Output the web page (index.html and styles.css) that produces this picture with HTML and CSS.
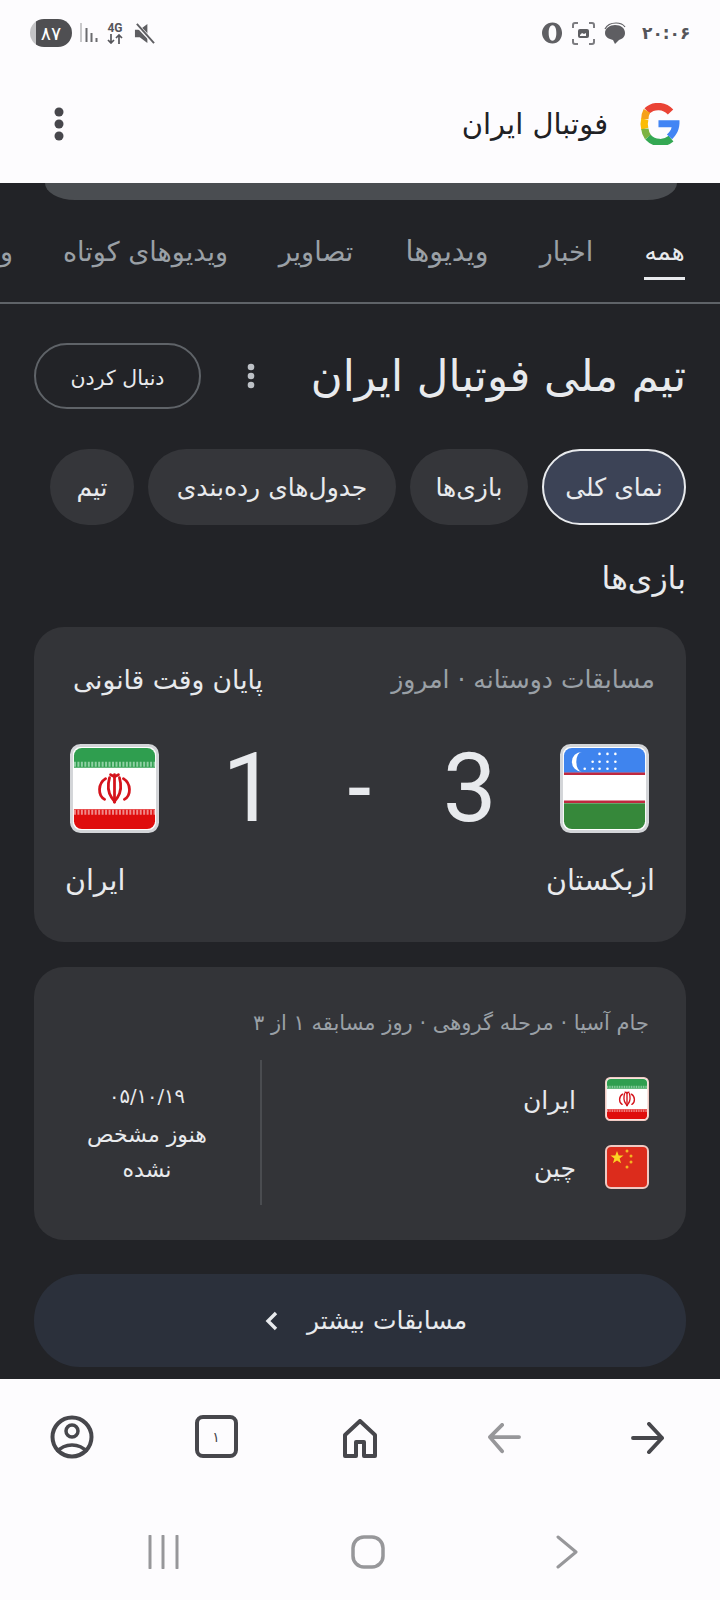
FILE: index.html
```html
<!DOCTYPE html>
<html lang="fa" dir="rtl">
<head>
<meta charset="utf-8">
<title>فوتبال ایران</title>
<link rel="stylesheet" href="styles.css">
</head>
<body>
<svg class="defs" width="0" height="0" aria-hidden="true">
  <symbol id="flag-iran" viewBox="0 0 90 90">
    <rect x="1.5" y="1.5" width="87" height="87" rx="9" fill="#fff" stroke="currentColor" stroke-width="3"/>
    <path d="M4 24V12a8 8 0 0 1 8-8h66a8 8 0 0 1 8 8v12z" fill="#2f9e4f"/>
    <path d="M4 66h82v12a8 8 0 0 1-8 8H12a8 8 0 0 1-8-8z" fill="#df0d0d"/>
    <path d="M4 20.500h82" stroke="#8fd0a3" stroke-width="5" stroke-dasharray="2 1.5"/>
    <path d="M4 69h82" stroke="#f08a8a" stroke-width="5" stroke-dasharray="2 1.500"/>
    <g fill="none" stroke="#d5141c" stroke-width="2.800" stroke-linecap="round">
      <path d="M45 31v28"/>
      <path d="M40 34c-2 7-2 14 2 20l3 4"/>
      <path d="M50 34c2 7 2 14-2 20l-3 4"/>
      <path d="M36 35c-8 5-8 17-1 21"/>
      <path d="M54 35c8 5 8 17 1 21"/>
      <path d="M41 31l4 2 4-2"/>
    </g>
  </symbol>
</svg>

<header class="top">
  <div class="status">
    <div class="status-left">
      <span class="battery"><span class="battery-num">۸۷</span></span>
      <svg class="i-signal" viewBox="0 0 18 20"><path d="M1 0v19" stroke="#c9c9cb" stroke-width="2"/><path d="M6.500 5v14M11.500 10v9M16.500 15v4" stroke="#6b6b6e" stroke-width="2"/></svg>
      <span class="net"><span class="net-g">4G</span><svg class="i-updown" viewBox="0 0 16 10"><path d="M4 0v9M1 6l3 3 3-3M12 10V1M9 4l3-3 3 3" fill="none" stroke="#55555a" stroke-width="1.700"/></svg></span>
      <svg class="i-mute" viewBox="0 0 22 22"><path d="M1 7h5l8-6v20l-8-6H1z" fill="#5e5e62"/><path d="M2 1l19 20" stroke="#fdfcfe" stroke-width="4"/><path d="M3 1l18 20" stroke="#5e5e62" stroke-width="2"/></svg>
    </div>
    <div class="status-right">
      <span class="time">۲۰:۰۶</span>
      <svg class="i-bubble" viewBox="0 0 22 22"><path d="M11 3c6 0 10 3 10 8 0 4-3 6-6 7l-4 4-2-4c-4-1-8-3-8-7 0-5 5-8 10-8z" fill="#5e5e62"/><path d="M1 7c2-4 6-6 11-6 4 0 7 1 9 4" fill="none" stroke="#5e5e62" stroke-width="1.200"/></svg>
      <svg class="i-shot" viewBox="0 0 25 25"><path d="M2 7V4a2 2 0 0 1 2-2h3M18 2h3a2 2 0 0 1 2 2v3M23 18v3a2 2 0 0 1-2 2h-3M7 23H4a2 2 0 0 1-2-2v-3" fill="none" stroke="#7c7c80" stroke-width="2"/><rect x="7" y="8" width="11" height="9" rx="2" fill="#5e5e62"/><path d="M9 14l2-2 2 1 2-1v3H9z" fill="#fdfcfe"/></svg>
      <svg class="i-opera" viewBox="0 0 22 22"><path fill-rule="evenodd" d="M11 0c6 0 10 5 10 11s-4 11-10 11S0 17 0 11 5 0 11 0zm0 3c-3 0-4 4-4 8s1 8 4 8 4-4 4-8-1-8-4-8z" fill="#606064"/></svg>
    </div>
  </div>
  <div class="searchbar">
    <svg class="g-logo" viewBox="1.500 1 40 40">
      <path d="M32.500 9.500A16 16 0 0 0 10 8.500" fill="none" stroke="#ea4335" stroke-width="7"/>
      <path d="M10 8.500a16 16 0 0 0-2 8" fill="none" stroke="#f6a11b" stroke-width="7"/>
      <path d="M8 16.500a16 16 0 0 0 0 9" fill="none" stroke="#fbbc05" stroke-width="7"/>
      <path d="M8 25.500a16 16 0 0 0 3 8" fill="none" stroke="#7cb342" stroke-width="7"/>
      <path d="M11 33.500a16 16 0 0 0 22 1.500" fill="none" stroke="#34a853" stroke-width="7"/>
      <path d="M21 17.500h20c.500 9-3 14-7 18l-5-4.500c2-2 4-4 4.500-7H21z" fill="#4285f4"/>
    </svg>
    <span class="query">فوتبال ایران</span>
    <svg class="kebab-top" viewBox="0 0 10 34"><circle cx="5" cy="5" r="4.500"/><circle cx="5" cy="17" r="4.500"/><circle cx="5" cy="29" r="4.500"/></svg>
  </div>
</header>

<main class="page">
  <div class="search-stub"></div>

  <nav class="tabs">
    <span class="tab tab-active">همه</span>
    <span class="tab tab-news">اخبار</span>
    <span class="tab tab-videos">ویدیوها</span>
    <span class="tab tab-images">تصاویر</span>
    <span class="tab tab-shorts">ویدیوهای کوتاه</span>
    <span class="tab">و</span>
  </nav>

  <section class="content">
    <div class="title-row">
      <h1 class="title">تیم ملی فوتبال ایران</h1>
      <svg class="kebab-title" viewBox="0 0 8 26"><circle cx="4" cy="4" r="3.300"/><circle cx="4" cy="13" r="3.300"/><circle cx="4" cy="22" r="3.300"/></svg>
      <button class="follow">دنبال کردن</button>
    </div>

    <div class="chips">
      <span class="chip chip-on">نمای کلی</span>
      <span class="chip chip-games">بازی‌ها</span>
      <span class="chip chip-tables">جدول‌های رده‌بندی</span>
      <span class="chip chip-team">تیم</span>
    </div>

    <h2 class="heading">بازی‌ها</h2>

    <article class="card result">
      <div class="result-head">
        <span class="muted">مسابقات دوستانه · امروز</span>
        <span class="final">پایان وقت قانونی</span>
      </div>
      <div class="score-row">
        <svg class="flag-big flag-edge" viewBox="0 0 90 90">
          <rect x="1.500" y="1.500" width="87" height="87" rx="9" fill="#fff" stroke="currentColor" stroke-width="3"/>
          <path d="M4 29V12a8 8 0 0 1 8-8h66a8 8 0 0 1 8 8v17z" fill="#3f84ee"/>
          <path d="M4 30h82M4 58.500h82" stroke="#c0293f" stroke-width="2.500"/>
          <path d="M4 60h82v18a8 8 0 0 1-8 8H12a8 8 0 0 1-8-8z" fill="#36883a"/>
          <path d="M22 8a10 10 0 0 0 0 20a5.500 10 0 0 1 0-20z" fill="#fff"/>
          <g fill="#fff"><circle cx="40" cy="10" r="1.300"/><circle cx="48" cy="10" r="1.300"/><circle cx="56" cy="10" r="1.300"/><circle cx="33" cy="18" r="1.300"/><circle cx="40" cy="18" r="1.300"/><circle cx="48" cy="18" r="1.300"/><circle cx="56" cy="18" r="1.300"/><circle cx="25" cy="25" r="1.300"/><circle cx="33" cy="25" r="1.300"/><circle cx="40" cy="25" r="1.300"/><circle cx="48" cy="25" r="1.300"/><circle cx="56" cy="25" r="1.300"/></g>
        </svg>
        <span class="score">3</span>
        <span class="score-dash">-</span>
        <span class="score">1</span>
        <svg class="flag-big flag-edge"><use href="#flag-iran"/></svg>
      </div>
      <div class="result-names">
        <span>ازبکستان</span>
        <span>ایران</span>
      </div>
    </article>

    <article class="card fixture">
      <div class="muted fixture-head">جام آسیا · مرحله گروهی · روز مسابقه ۱ از ۳</div>
      <div class="fixture-body">
        <div class="teams">
          <div class="team">
            <svg class="flag-small flag-edge-pink"><use href="#flag-iran"/></svg>
            <span class="team-name">ایران</span>
          </div>
          <div class="team">
            <svg class="flag-small flag-edge-pink" viewBox="0 0 44 44">
              <rect x="1" y="1" width="42" height="42" rx="5" fill="#dc2c1c" stroke="currentColor" stroke-width="2"/>
              <path d="M12 6l1.700 4.600h4.800l-3.900 3 1.500 4.700-4.100-2.800-4.100 2.800 1.500-4.700-3.900-3h4.800z" fill="#fbd322"/>
              <g fill="#f4b320"><circle cx="22" cy="6" r="1.500"/><circle cx="26" cy="11" r="1.500"/><circle cx="26" cy="17" r="1.500"/><circle cx="22" cy="22" r="1.500"/></g>
            </svg>
            <span class="team-name">چین</span>
          </div>
        </div>
        <div class="when">
          <span class="when-date">۰۵/۱۰/۱۹</span>
          <span>هنوز مشخص</span>
          <span>نشده</span>
        </div>
      </div>
    </article>

    <a class="more">
      <span>مسابقات بیشتر</span>
      <svg class="i-chev" viewBox="0 0 14 20"><path d="M11 2L3 10l8 8" fill="none" stroke="#e8eaed" stroke-width="3.400"/></svg>
    </a>
  </section>
</main>

<footer class="bottom">
  <div class="toolbar">
    <svg class="i-forward" viewBox="0 0 36 34"><path d="M2 17h31M19 2l14 15-14 15" fill="none" stroke="#47474c" stroke-width="4" stroke-linecap="round" stroke-linejoin="round"/></svg>
    <svg class="i-back" viewBox="0 0 36 34"><path d="M34 15H3M16 2L3 15l13 15" fill="none" stroke="#97979a" stroke-width="4" stroke-linecap="round" stroke-linejoin="round"/></svg>
    <svg class="i-home" viewBox="0 0 34 40"><path d="M17 2L2 16v21h11V23h8v14h11V16z" fill="none" stroke="#47474c" stroke-width="4" stroke-linejoin="round"/></svg>
    <span class="i-tabs">۱</span>
    <svg class="i-user" viewBox="0 0 44 44"><circle cx="22" cy="22" r="19.500" fill="none" stroke="#47474c" stroke-width="4"/><circle cx="22" cy="16" r="6" fill="none" stroke="#47474c" stroke-width="3.500"/><path d="M7 37c4-5 9-7 15-7s11 2 15 7" fill="none" stroke="#47474c" stroke-width="3.500"/></svg>
  </div>
  <div class="navbar">
    <svg class="i-nav-back" viewBox="0 0 22 34"><path d="M2 2l18 15L2 32" fill="none" stroke="#97979a" stroke-width="3" stroke-linecap="round" stroke-linejoin="round"/></svg>
    <svg class="i-nav-home" viewBox="0 0 34 34"><rect x="2" y="2" width="30" height="30" rx="11" fill="none" stroke="#97979a" stroke-width="3.500"/></svg>
    <svg class="i-nav-recent" viewBox="0 0 32 34"><path d="M2 1v32M15 1v32M29 1v32" stroke="#97979a" stroke-width="3" stroke-linecap="round"/></svg>
  </div>
</footer>
</body>
</html>
```
FILE: styles.css
```css
* { box-sizing: border-box; }
html, body { margin: 0; padding: 0; }
body {
  width: 720px;
  height: 1600px;
  overflow: hidden;
  display: flex;
  flex-direction: column;
  font-family: "DejaVu Sans", "Noto Sans", sans-serif;
  background: #222327;
  color: #e8eaed;
}
.defs { position: absolute; }

/* top */
.top { height: 183px; background: #fdfcfe; color: #202124; flex: none; }
.status {
  height: 66px;
  padding: 19px 30px 0 30px;
  display: flex;
  flex-direction: row-reverse;
  justify-content: space-between;
  align-items: flex-start;
}
.status-left { display: flex; direction: ltr; align-items: center; height: 28px; }
.status-right { display: flex; direction: ltr; flex-direction: row-reverse; align-items: center; height: 28px; }
.battery {
  width: 42px; height: 28px; border-radius: 14px;
  background: linear-gradient(90deg, #c4c4c6 15%, #4f4f52 15%);
  display: flex; align-items: center; justify-content: center;
}
.battery-num { font-size: 19px; color: #fff; }
.i-signal { width: 18px; height: 20px; margin-left: 8px; }
.net { display: flex; flex-direction: column; align-items: center; width: 16px; margin-left: 9px; }
.net-g { font-size: 12px; line-height: 12px; font-family: "Roboto", sans-serif; font-weight: 700; color: #55555a; }
.i-updown { width: 16px; height: 10px; }
.i-mute { width: 21px; height: 21px; margin-left: 11px; }
.time { font-size: 17px; color: #55555a; font-weight: 700; margin-right: 0; width: 48px; direction: ltr; text-align: center; }
.i-bubble { width: 22px; height: 22px; margin-right: 16px; }
.i-shot { width: 25px; height: 25px; margin-right: 8px; }
.i-opera { width: 21px; height: 22px; margin-right: 8px; }

.searchbar { height: 117px; padding: 37px 40px 0 54px; display: flex; align-items: flex-start; }
.g-logo { width: 42px; height: 42px; flex: none; }
.query { font-size: 29px; line-height: 42px; margin-right: 30px; color: #202124; }
.kebab-top { width: 10px; height: 34px; margin-right: auto; margin-top: 4px; fill: #47474c; }

/* page */
.page { flex: 1; min-height: 0; overflow: hidden; }
.search-stub { height: 17px; margin: 0 43px 0 45px; background: #4a4d51; border-radius: 0 0 30px 30px / 0 0 17px 17px; }
.tabs {
  height: 104px;
  border-bottom: 2px solid #5f6368;
  display: flex;
  gap: 51px;
  padding: 0 35px 0 0;
  overflow: hidden;
  white-space: nowrap;
  font-size: 27px;
  color: #9aa0a6;
}
.tab { flex: none; height: 80px; padding-top: 32px; line-height: 40px; display: flex; justify-content: center; }
.tab-active { width: 41px; font-size: 24.500px; color: #e8eaed; border-bottom: 3px solid #e8eaed; }
.tab-news { width: 53px; }
.tab-videos { width: 84px; font-size: 28.500px; }
.tab-images { width: 76px; }
.tab-shorts { width: 163px; }

.content { padding: 0 34px 0 34px; }
.title-row { height: 66px; margin-top: 39px; display: flex; align-items: center; }
.title { margin: 0; font-size: 43.500px; font-weight: 400; line-height: 66px; white-space: nowrap; }
.kebab-title { width: 8px; height: 26px; margin-right: auto; fill: #bdc1c6; }
.follow {
  width: 167px; height: 66px; margin-right: 46px; border: 2px solid #5f6368; border-radius: 33px;
  background: none; color: #e8eaed; font: inherit; font-size: 20.500px; padding: 4px 0 0;
}

.chips { display: flex; gap: 14px; margin-top: 40px; }
.chip {
  height: 76px; border-radius: 38px; background: #35363a; font-size: 25px;
  display: flex; align-items: center; justify-content: center; white-space: nowrap; color: #e8eaed;
}
.chip-on { width: 144px; background: #3c4356; border: 2px solid #e8eaed; }
.chip-games { width: 118px; }
.chip-tables { width: 248px; }
.chip-team { width: 84px; }

.heading { margin: 30px 0 0; font-size: 31.500px; font-weight: 400; line-height: 46px; }

.card { background: #333438; border-radius: 30px; }
.result { height: 315px; margin-top: 26px; padding: 32px 31px 0 31px; }
.muted { color: #9aa0a6; font-size: 25px; }
.result-head { display: flex; justify-content: space-between; align-items: center; line-height: 42px; }
.final { font-size: 26.500px; color: #e8eaed; margin-left: 8px; }
.score-row { display: flex; align-items: center; height: 89px; margin: 43px 6px 0 5px; justify-content: space-between; }
.flag-big { width: 89px; height: 89px; flex: none; }
.flag-edge { color: #d3d5d8; }
.flag-edge-pink { color: #efc9c2; }
.score { font-family: "Roboto", sans-serif; font-size: 96px; font-weight: 400; line-height: 89px; width: 70px; text-align: center; }
.score-dash { font-family: "Roboto", sans-serif; font-size: 78px; font-weight: 500; line-height: 89px; width: 40px; text-align: center; }
.result-names { display: flex; justify-content: space-between; font-size: 28.500px; line-height: 46px; margin-top: 25px; }

.fixture { height: 273px; margin-top: 25px; padding: 36px 37px 0 0; }
.fixture-head { line-height: 40px; font-size: 21px; }
.fixture-body { display: flex; margin-top: 17px; height: 145px; }
.teams { width: 389px; display: flex; flex-direction: column; padding-top: 17px; gap: 24px; border-left: 2px solid #4a4c50; }
.team { display: flex; align-items: center; gap: 29px; font-size: 25px; height: 44px; }
.team-name { padding-top: 2px; }
.flag-small { width: 44px; height: 44px; flex: none; }
.when { flex: 1; display: flex; flex-direction: column; align-items: center; padding-top: 17px; font-size: 22px; line-height: 35px; }
.when-date { font-size: 19.500px; line-height: 40px; }

.more {
  height: 93px; margin-top: 34px; padding-left: 12px; background: #2b303b; border-radius: 46px;
  display: flex; align-items: center; justify-content: center; gap: 28px; font-size: 25px; color: #e8eaed;
}
.i-chev { width: 14px; height: 20px; }

/* bottom */
.bottom { height: 221px; flex: none; background: #fdfcfe; }
.toolbar { height: 121px; padding-top: 36px; display: grid; grid-template-columns: repeat(5, 1fr); justify-items: center; align-items: start; }
.i-forward { width: 34px; height: 32px; margin-top: 7px; }
.i-back { width: 34px; height: 32px; margin-top: 8px; }
.i-home { width: 34px; height: 40px; margin-top: 4px; }
.i-user { width: 44px; height: 44px; }
.i-tabs {
  width: 43px; height: 43px; border: 4px solid #47474c; border-radius: 8px; color: #47474c;
  display: flex; align-items: center; justify-content: center; font-size: 14px;
}
.navbar { padding: 35px 142px 0 148px; display: flex; justify-content: space-between; align-items: flex-start; }
.i-nav-back { width: 22px; height: 34px; }
.i-nav-home { width: 34px; height: 34px; }
.i-nav-recent { width: 32px; height: 34px; }
```
